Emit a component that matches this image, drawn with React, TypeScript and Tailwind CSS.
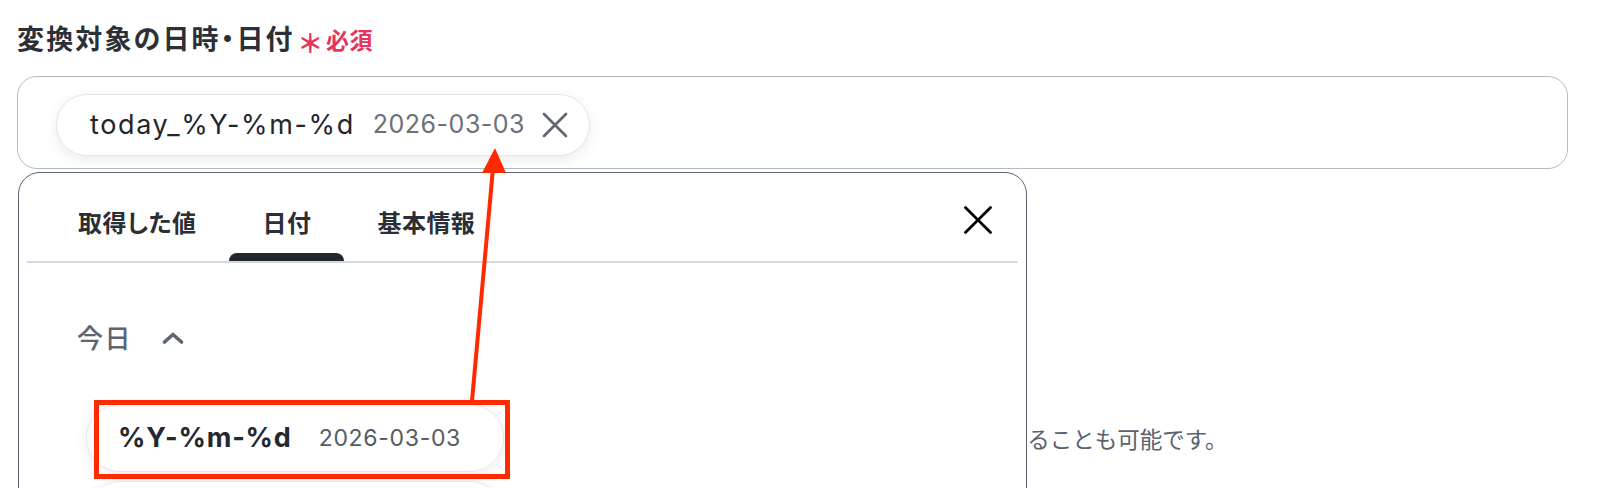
import React from "react";

const XIcon = ({ className = "", strokeWidth = 2.6 }: { className?: string; strokeWidth?: number }) => (
  <svg viewBox="-2 -2 28 28" className={className} fill="none" stroke="currentColor" strokeWidth={strokeWidth} strokeLinecap="round">
    <path d="M1 1l22 22M23 1L1 23" />
  </svg>
);

const ChevronUp = ({ className = "" }: { className?: string }) => (
  <svg viewBox="0 0 22 12" className={className} fill="none" stroke="currentColor" strokeWidth={3.6} strokeLinecap="round" strokeLinejoin="round">
    <path d="M2.5 10L11 2.5l8.5 7.5" />
  </svg>
);

const tabs = ["取得した値", "日付", "基本情報"];

const FormatCard = ({ format, value }: { format: string; value: string }) => (
  <div className="flex h-[68px] w-[418px] items-center rounded-full border border-[#e6e8ec] bg-white pl-[31px] shadow-[0_2px_14px_rgba(0,0,0,0.07)]">
    <span className="text-[27px] font-bold tracking-[0.03em] text-[#24282f]">{format}</span>
    <span className="ml-[27px] text-[23px] tracking-[0.03em] text-[#545b66]">{value}</span>
  </div>
);

export default function App() {
  const activeTab = 1;

  return (
    <div className="relative h-[488px] w-[1620px] overflow-hidden bg-white font-['Inter','Noto_Sans_CJK_JP',sans-serif]">
      <div className="pl-[17px] pr-[52px] pt-[20px]">
        {/* ラベル */}
        <div className="flex h-[40px] items-center [font-feature-settings:'palt']">
          <span className="text-[27px] font-bold tracking-[0.08em] text-[#2b2f36]">変換対象の日時・日付</span>
          <span className="ml-[5px] mt-[6px] text-[26px] font-bold text-[#e8335b]">＊</span>
          <span className="ml-[5px] mt-[2px] text-[23px] font-bold tracking-[0.02em] text-[#e8335b]">必須</span>
        </div>

        {/* 入力欄 */}
        <div className="mt-[16px] h-[93px] rounded-[20px] border-[1.5px] border-[#b3bbc5] pl-[38px] pt-[17px]">
          <div className="inline-flex h-[62px] items-center rounded-full border border-[#e3e6ea] bg-white pl-[33px] pr-[20px] shadow-[0_4px_14px_rgba(0,0,0,0.08)]">
            <span className="text-[27px] tracking-[0.06em] text-[#22262c]">today_%Y-%m-%d</span>
            <span className="ml-[18px] text-[25px] tracking-[0.02em] text-[#6b7079]">2026-03-03</span>
            <XIcon className="ml-[16px] h-[28px] w-[28px] text-[#5f6672]" strokeWidth={2.7} />
          </div>
        </div>

        <p className="ml-[46px] mt-[256px] text-[22.5px] leading-[30px] text-[#5a626e]">
          日時・日付を入力してください。アウトプットを利用して、前のステップで取得した値を設定することも可能です。
        </p>
      </div>

      {/* ドロップダウン */}
      <div className="absolute left-[18px] top-[172px] h-[360px] w-[1009px] rounded-[22px] border-[1.5px] border-[#5c6470] bg-white px-[8px] [font-feature-settings:'palt']">
        <div className="flex h-[90px] border-b-2 border-[#d5dae1] pl-[18px]">
          {tabs.map((tab, i) => (
            <div key={tab} className="flex flex-col items-center px-[33px] pt-[37px]">
              <span className="text-[24px] font-bold leading-[28px] tracking-[0.02em] text-[#2a2e35]">{tab}</span>
              <div className={"mt-auto h-[8px] w-[calc(100%+66px)] rounded-t-[8px] " + (i === activeTab ? "bg-[#23272e]" : "bg-transparent")} />
            </div>
          ))}
          <XIcon className="ml-auto mr-[24px] mt-[31px] h-[32px] w-[32px] text-black" strokeWidth={2.4} />
        </div>

        <div className="pl-[50px] pt-[55px]">
          <div className="flex h-[40px] items-center text-[#5d6570]">
            <span className="text-[26px] font-medium tracking-[0.06em]">今日</span>
            <ChevronUp className="ml-[30px] h-[12px] w-[22px]" />
          </div>
          <div className="ml-[9px] mt-[46px] flex flex-col gap-[9px]">
            <FormatCard format="%Y-%m-%d" value="2026-03-03" />
            <FormatCard format="%Y/%m/%d" value="2026/03/03" />
          </div>
        </div>
      </div>

      {/* 注釈 */}
      <div className="absolute left-[94px] top-[400px] h-[79px] w-[416px] border-[5px] border-[#ff2a00]" />
      <svg className="absolute left-0 top-0" width="1620" height="488">
        <line x1="472" y1="401" x2="493" y2="168" stroke="#ff2a00" strokeWidth="4" />
        <polygon points="495,148 482,173 506,173" fill="#ff2a00" />
      </svg>
    </div>
  );
}
